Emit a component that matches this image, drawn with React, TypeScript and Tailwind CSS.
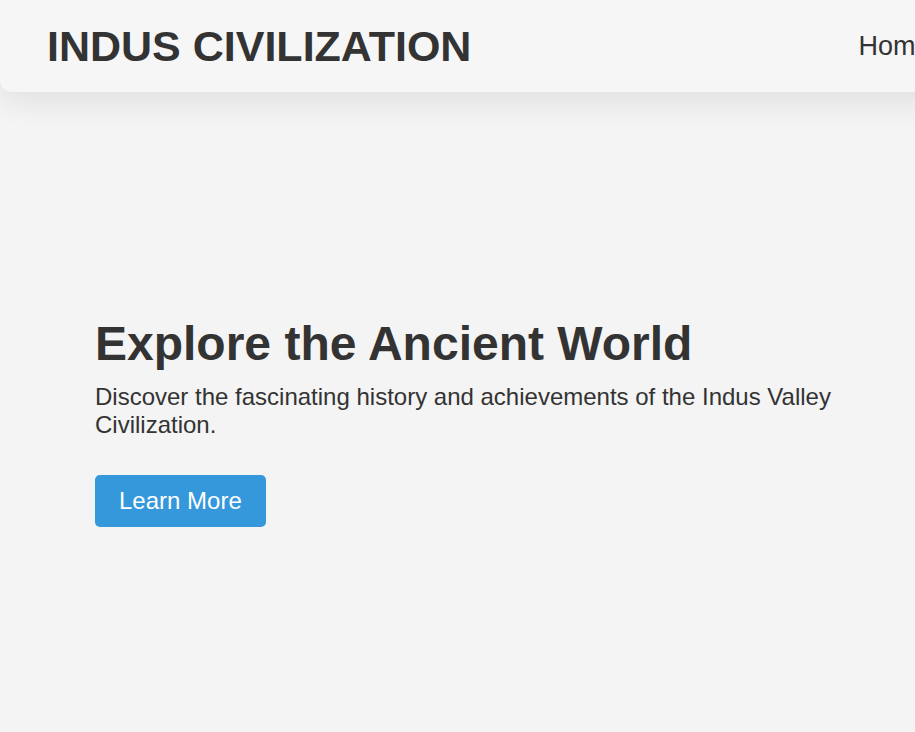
export default function App() {
  return (
    <div
      className="min-h-[732px] w-full overflow-hidden bg-[#f4f4f4] text-[#333]"
      style={{ fontFamily: '"Liberation Sans", Arial, sans-serif' }}
    >
      <header className="flex h-[92px] w-[1400px] items-center rounded-bl-[12px] bg-[#f6f6f6] pl-[47px] shadow-[0_8px_32px_rgba(0,0,0,0.09)]">
        <div className="text-[43px] font-bold leading-[normal] whitespace-nowrap">INDUS CIVILIZATION</div>
        <nav className="ml-[387px] flex gap-[32px] text-[27px] leading-[normal] whitespace-nowrap">
          <a>Home</a>
          <a>About</a>
          <a>History</a>
          <a>Culture</a>
          <a>Contact</a>
        </nav>
      </header>
      <section className="pl-[95px] pt-[224px]">
        <h1 className="mb-[12px] text-[48px] font-bold leading-[normal]">Explore the Ancient World</h1>
        <p className="max-w-[800px] text-[24px] leading-[normal]">
          Discover the fascinating history and achievements of the Indus Valley Civilization.
        </p>
        <button className="mt-[36px] rounded-[5px] bg-[#3498db] px-[24px] py-[12px] text-[24px] leading-[normal] text-white">
          Learn More
        </button>
      </section>
    </div>
  );
}
